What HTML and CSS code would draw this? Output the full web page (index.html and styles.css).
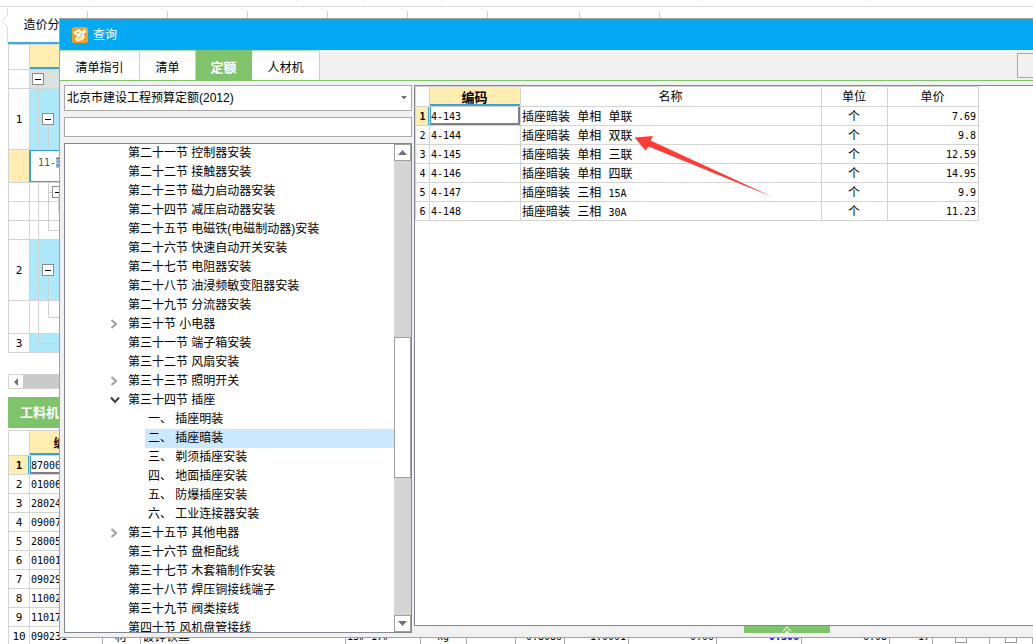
FILE: index.html
```html
<!DOCTYPE html>
<html lang="zh-CN">
<head>
<meta charset="utf-8">
<title>查询</title>
<link rel="stylesheet" href="styles.css">
</head>
<body>
<main class="app">
  <div class="toolbar"><i class="w206"></i><i class="w67"></i><i class="w78"></i><i class="w257"></i><i class="w171"></i><i></i></div>
  <nav class="pages">
    <svg class="pages-edge" width="8" height="36" viewBox="0 0 8 36"><path d="M7.500 1V8L2 14.500L7.500 20V36" fill="none" stroke="#dcdcdc"/></svg>
    <button class="page-tab">造价分析</button>
    <i></i><i></i><i></i><i></i><i></i><i class="broad"></i><i></i><i></i>
  </nav>

  <section class="outline">
    <div class="o-row o-head"><span class="o-num"></span><span class="o-cell"></span></div>
    <div class="o-row o-short o-total"><span class="o-num"></span><span class="o-cell"><button class="fold" aria-label="折叠"></button></span></div>
    <div class="o-row o-tall o-blue"><span class="o-num">1</span><span class="o-cell level-1"><button class="fold" aria-label="折叠"></button></span></div>
    <div class="o-row o-mid o-edit"><span class="o-num"></span><span class="o-cell">11-<mark>3</mark></span></div>
    <div class="o-row o-short"><span class="o-num"></span><span class="o-cell level-2"><button class="fold" aria-label="折叠"></button></span></div>
    <div class="o-row o-short"><span class="o-num"></span><span class="o-cell"></span></div>
    <div class="o-row o-short"><span class="o-num"></span><span class="o-cell"></span></div>
    <div class="o-row o-tall o-blue"><span class="o-num">2</span><span class="o-cell level-1"><button class="fold" aria-label="折叠"></button></span></div>
    <div class="o-row o-mid"><span class="o-num"></span><span class="o-cell"></span></div>
    <div class="o-row o-short o-blue"><span class="o-num">3</span><span class="o-cell"></span></div>
    <svg class="branches" width="32" height="310" viewBox="0 0 32 310"><path d="M8.500 40V105M8.500 138V298.500H26M8.500 74.500H12M18.500 81V105M18.500 138V185.500H32M18.500 147.500H22M28.500 154V166M8.500 225.500H12M18.500 232V272.500H32" fill="none" stroke="#d0d0d0"/></svg>
  </section>
  <div class="hscroll"><button aria-label="向左滚动"><svg width="6" height="8" viewBox="0 0 6 8"><path d="M5 0V8L1 4Z" fill="#6d7182"/></svg></button></div>

  <div class="section-bar"><button>工料机显示</button></div>
  <table class="materials">
    <colgroup><col class="w21"><col class="w73"><col class="w38"><col class="w205"><col class="w75"><col class="w46"><col class="w49"><col class="w49"><col class="w64"><col class="w88"><col class="w85"><col class="w88"><col class="w43"><col class="w57"><col></colgroup>
    <thead><tr><th></th><th class="current">编码</th><th colspan="13"></th></tr></thead>
    <tbody>
      <tr class="active"><th>1</th><td>870001</td><td colspan="13"></td></tr>
      <tr><th>2</th><td>010063</td><td colspan="13"></td></tr>
      <tr><th>3</th><td>280248</td><td colspan="13"></td></tr>
      <tr><th>4</th><td>090071</td><td colspan="13"></td></tr>
      <tr><th>5</th><td>280056</td><td colspan="13"></td></tr>
      <tr><th>6</th><td>010012</td><td colspan="13"></td></tr>
      <tr><th>7</th><td>090290</td><td colspan="13"></td></tr>
      <tr><th>8</th><td>110022</td><td colspan="13"></td></tr>
      <tr><th>9</th><td>110172</td><td colspan="13"></td></tr>
      <tr class="last"><th>10</th><td>090231</td><td class="mid cjk">材</td><td class="cjk">镀锌铁丝</td><td>13#~17#</td><td class="mid">kg</td><td></td><td class="end">0.8080</td><td class="end">1.0001</td><td class="end">0.00</td><td class="end changed">0.306</td><td class="end">6.08</td><td class="end">17</td><td class="mid"><input type="checkbox" aria-label="暂估"></td><td class="mid"><input type="checkbox" aria-label="锁定"></td></tr>
    </tbody>
  </table>
</main>

<section class="dialog" role="dialog" aria-labelledby="dialog-title">
  <header class="title">
    <svg width="16" height="16" viewBox="0 0 16 16"><rect width="16" height="16" rx="2" fill="#f7a01d"/><path d="M1.500 5L7 2L9.500 4.500L12.500 2L14.500 4L11.500 8L13 10L10.500 13L5 14.500L3 12L5.500 8.500L3 8Z" fill="#fff"/><path d="M4.500 6L7 5L5.500 7.500M6 12L10.500 6M8.500 11L10.500 9.500" fill="none" stroke="#f7a01d"/></svg>
    <h1 id="dialog-title">查询</h1>
  </header>
  <nav class="tabs">
    <button class="wide">清单指引</button><button>清单</button><button class="selected">定额</button><button class="third">人材机</button>
    <button class="action" aria-label="操作"></button>
  </nav>
  <div class="content">
    <aside class="side">
      <div class="combo">
        <select aria-label="定额库"><option>北京市建设工程预算定额(2012)</option></select>
        <svg width="6" height="4" viewBox="0 0 6 4"><path d="M0 0H6L3 3.500Z" fill="#6d7182"/></svg>
      </div>
      <input class="search" type="text" aria-label="搜索">
      <div class="tree-box">
        <ul class="tree">
          <li>第二十一节 控制器安装</li>
          <li>第二十二节 接触器安装</li>
          <li>第二十三节 磁力启动器安装</li>
          <li>第二十四节 减压启动器安装</li>
          <li>第二十五节 电磁铁(电磁制动器)安装</li>
          <li>第二十六节 快速自动开关安装</li>
          <li>第二十七节 电阻器安装</li>
          <li>第二十八节 油浸频敏变阻器安装</li>
          <li>第二十九节 分流器安装</li>
          <li class="closed"><svg width="8" height="10" viewBox="0 0 8 10"><path d="M1.500 1L6 5L1.500 9"/></svg>第三十节 小电器</li>
          <li>第三十一节 端子箱安装</li>
          <li>第三十二节 风扇安装</li>
          <li class="closed"><svg width="8" height="10" viewBox="0 0 8 10"><path d="M1.500 1L6 5L1.500 9"/></svg>第三十三节 照明开关</li>
          <li class="open"><svg width="10" height="8" viewBox="0 0 10 8"><path d="M1 1.500L5 6L9 1.500"/></svg>第三十四节 插座</li>
          <li class="child">一、 插座明装</li>
          <li class="child picked">二、 插座暗装</li>
          <li class="child">三、 剃须插座安装</li>
          <li class="child">四、 地面插座安装</li>
          <li class="child">五、 防爆插座安装</li>
          <li class="child">六、 工业连接器安装</li>
          <li class="closed"><svg width="8" height="10" viewBox="0 0 8 10"><path d="M1.500 1L6 5L1.500 9"/></svg>第三十五节 其他电器</li>
          <li>第三十六节 盘柜配线</li>
          <li>第三十七节 木套箱制作安装</li>
          <li>第三十八节 焊压铜接线端子</li>
          <li>第三十九节 阀类接线</li>
          <li>第四十节 风机盘管接线</li>
        </ul>
        <div class="vscroll">
          <button aria-label="向上滚动"><svg width="9" height="5" viewBox="0 0 9 5"><path d="M0 5H9L4.500 0Z" fill="#6d7182"/></svg></button>
          <span class="before"></span><span class="thumb"></span><span class="after"></span>
          <button aria-label="向下滚动"><svg width="9" height="5" viewBox="0 0 9 5"><path d="M0 0H9L4.500 5Z" fill="#6d7182"/></svg></button>
        </div>
      </div>
    </aside>
    <div class="results">
      <div class="results-box">
        <table class="quota">
          <colgroup><col class="w14"><col class="w91"><col class="w301"><col class="w66"><col class="w91"></colgroup>
          <thead><tr><th></th><th class="current">编码</th><th>名称</th><th>单位</th><th>单价</th></tr></thead>
          <tbody>
            <tr class="active"><th>1</th><td>4-143</td><td class="cjk">插座暗装 单相 单联</td><td class="mid cjk">个</td><td class="end">7.69</td></tr>
            <tr><th>2</th><td>4-144</td><td class="cjk">插座暗装 单相 双联</td><td class="mid cjk">个</td><td class="end">9.8</td></tr>
            <tr><th>3</th><td>4-145</td><td class="cjk">插座暗装 单相 三联</td><td class="mid cjk">个</td><td class="end">12.59</td></tr>
            <tr><th>4</th><td>4-146</td><td class="cjk">插座暗装 单相 四联</td><td class="mid cjk">个</td><td class="end">14.95</td></tr>
            <tr><th>5</th><td>4-147</td><td class="cjk">插座暗装 三相 <span class="code">15A</span></td><td class="mid cjk">个</td><td class="end">9.9</td></tr>
            <tr><th>6</th><td>4-148</td><td class="cjk">插座暗装 三相 <span class="code">30A</span></td><td class="mid cjk">个</td><td class="end">11.23</td></tr>
          </tbody>
        </table>
        <svg class="arrow" width="140" height="62" viewBox="0 0 140 62"><path d="M0.500 1.500L19 0L16.500 4.500L138.500 61L14.500 10.500L11.500 14.500Z" fill="#ff3b38"/></svg>
      </div>
      <button class="expand" aria-label="展开"><svg width="10" height="7" viewBox="0 0 10 7"><path d="M1 5.500L5 1L9 5.500" fill="none" stroke="#c9e8bd" stroke-width="1.500"/><path d="M3 7L5 4.500L7 7Z" fill="#fff"/></svg></button>
    </div>
  </div>
</section>
</body>
</html>
```
FILE: styles.css
```css
* { box-sizing: border-box; }
html, body { height: 100%; }
body {
  position: relative;
  margin: 0;
  overflow: hidden;
  background: #fff;
  color: #000;
  font: 12px/18px "Liberation Sans", "Noto Sans CJK SC", sans-serif;
}
button, input, select { font: inherit; color: inherit; margin: 0; padding: 0; border: 0; border-radius: 0; background: none; }
svg { display: block; flex: none; }

/* main window */
.app { display: flex; flex-direction: column; height: 100%; overflow: hidden; }
.toolbar { display: flex; flex: none; height: 7px; padding-left: 90px; border-bottom: 1px solid #dcdcdc; overflow: hidden; }
.toolbar i { flex: none; height: 1px; border-left: 1px solid #dcdcdc; }
.pages { display: flex; flex: none; height: 37px; overflow: hidden; }
.pages i { flex: none; width: 80px; height: 9px; margin-top: 4px; border-left: 1px solid #d0d0d0; }
.pages .broad { width: 92px; }
.page-tab { flex: none; width: 79px; border-bottom: 2px solid #38aee0; }

.outline { position: relative; flex: none; margin-left: 8px; border-left: 1px solid #d4d4d4; border-top: 1px solid #d4d4d4; }
.o-row { display: flex; border-bottom: 1px solid #d4d4d4; }
.o-num { display: flex; flex: none; align-items: center; justify-content: center; width: 21px; border-right: 1px solid #d4d4d4; font: 11px "DejaVu Sans Mono", monospace; }
.o-cell { display: flex; flex: none; align-items: center; width: 90px; padding-left: 2px; }
.o-short { height: 19px; }
.o-mid { height: 33px; }
.o-tall { height: 61px; }
.o-head { height: 25px; }
.o-head .o-cell { background: #ffedb1; border-bottom: 2px solid #38a3d1; }
.o-total .o-cell { background: #d9e2dd; }
.o-blue .o-cell { background: #ade8fb; }
.o-edit .o-num { width: 20px; background: #ffedb1; border-right: 0; }
.o-edit .o-cell { align-items: flex-start; padding: 6px 0 0 7px; border: 1px solid #38a3d1; border-left-width: 2px; font: 10px "DejaVu Sans Mono", monospace; color: #555; }
.o-edit mark { background: #9fc4f0; color: #555; }
.level-1 { padding-left: 12px; }
.level-2 { padding-left: 22px; }
.fold { position: relative; z-index: 1; display: flex; align-items: center; width: 12px; height: 12px; padding: 0 2px; background: #fff; border: 1px solid #8c8c8c; }
.fold::before { content: ""; width: 6px; height: 1px; background: #000; }
.branches { position: absolute; left: 21px; top: 0; }

.hscroll { display: flex; flex: none; height: 15px; margin: 21px 0 8px 8px; background: #cacaca; border: 1px solid #d4d4d4; }
.hscroll button { display: flex; align-items: center; justify-content: center; width: 14px; background: #fff; }
.section-bar { flex: none; margin-left: 8px; height: 31px; background: #7fc36a; }
.section-bar button { height: 31px; padding-left: 12px; color: #fff; font-size: 13px; font-weight: bold; }

table { border-collapse: collapse; table-layout: fixed; font: 10px/16px "DejaVu Sans Mono", "Noto Sans CJK SC", monospace; }
th, td { height: 19px; padding: 2px 2px 0 1px; border: 1px solid #d4d4d4; line-height: 16px; overflow: hidden; white-space: nowrap; }
td { text-align: left; }
tbody th { padding: 2px 0 0; font-weight: normal; text-align: center; }
thead th { padding-top: 4px; font: 12px/15px "Liberation Mono", "Noto Sans CJK SC", monospace; }
th.current { background: #ffedb1; box-shadow: inset 0 -2px #38a3d1; font-weight: bold; }
td.mid { text-align: center; }
td.end { text-align: right; }
td.cjk { padding-top: 4px; font: 12px/14px "Liberation Mono", "Noto Sans CJK SC", monospace; }
.code { font: 10px/10px "DejaVu Sans Mono", monospace; }
.active th { background: #ffedb1; box-shadow: inset -1px 0 #38a3d1; font-weight: bold; }
.active th + td { box-shadow: inset 1px 0 #38a3d1, inset -2px -2px #808080; }

.materials { flex: none; width: calc(100% - 8px); margin: 2px 0 0 8px; }
.materials thead th { height: 25px; }
.materials tbody th { font-size: 11px; }
.last td { border-color: #a8a8a8; }
.changed { color: #00f; font-weight: bold; }
.materials input { display: block; appearance: none; width: 12px; height: 12px; margin: 0 auto; border: 1px solid #999; }
.w14 { width: 14px; }
.w21 { width: 21px; }
.w38 { width: 38px; }
.w43 { width: 43px; }
.w46 { width: 46px; }
.w49 { width: 49px; }
.w57 { width: 57px; }
.w64 { width: 64px; }
.w66 { width: 66px; }
.w67 { width: 67px; }
.w73 { width: 73px; }
.w75 { width: 75px; }
.w78 { width: 78px; }
.w85 { width: 85px; }
.w88 { width: 88px; }
.w91 { width: 91px; }
.w171 { width: 171px; }
.w205 { width: 205px; }
.w206 { width: 206px; }
.w257 { width: 257px; }
.w301 { width: 301px; }

/* query window */
.dialog { position: absolute; z-index: 2; inset: 18px 0 6px 59px; display: flex; flex-direction: column; background: #f1f1f1; border: 1px solid #a3a3a3; border-right: 0; }
.title { display: flex; flex: none; align-items: center; gap: 5px; height: 31px; padding-left: 12px; background: #03a9f3; color: #fff; }
.title h1 { margin: 0; font-size: 12px; font-weight: normal; }
.tabs { display: flex; flex: none; height: 31px; border-bottom: 1px solid #7fc36a; }
.tabs button { width: 56px; padding-top: 4px; background: #fff; border-top: 1px solid #b7e3a8; border-right: 1px solid #b7e3a8; }
.tabs .wide { width: 80px; }
.tabs .third { width: 68px; }
.tabs .selected { background: #7fc36a; border-color: #7fc36a; color: #fff; font-size: 13px; font-weight: bold; }
.tabs .action { width: 16px; height: 25px; margin: 3px 0 0 auto; background: #f1f1f1; border: 1px solid #a8a8a8; border-right: 0; }
.content { display: flex; flex: 1; gap: 2px; min-height: 0; padding: 4px 0 4px 4px; }
.side { display: flex; flex: 0 0 348px; flex-direction: column; min-width: 0; }
.combo { display: flex; flex: none; align-items: center; height: 26px; padding-right: 4px; background: #fff; border: 1px solid #a8a8a8; }
.combo select { flex: 1; appearance: none; height: 24px; padding-left: 2px; }
.search { flex: none; width: 100%; height: 20px; margin: 6px 0; padding: 0 2px; background: #fff; border: 1px solid #a8a8a8; }
.tree-box { display: flex; flex: 1; min-height: 0; background: #fff; border: 1px solid #828790; }
.tree { flex: 1; margin: 0; padding: 0; list-style: none; overflow: hidden; }
.tree li { display: flex; align-items: center; height: 19px; padding: 0 0 2px 63px; white-space: pre; }
.tree li.closed, .tree li.open { padding-left: 45px; }
.tree svg { margin-right: 10px; fill: none; stroke: #a0a0a0; stroke-width: 2; }
.tree .open svg { margin-right: 8px; stroke: #404040; }
.tree li.child { margin-left: 80px; padding-left: 3px; }
.tree .picked { background: #cce8ff; }
.vscroll { display: flex; flex: 0 0 17px; flex-direction: column; background: #d4d4d4; }
.vscroll button { display: flex; flex: none; align-items: center; justify-content: center; height: 17px; background: #fff; border: 1px solid #a0a0a0; }
.vscroll .before { flex: 177; }
.vscroll .thumb { flex: 139; background: #fff; border: 1px solid #a0a0a0; }
.vscroll .after { flex: 138; }

.results { display: flex; flex: 1; flex-direction: column; min-width: 0; }
.results-box { position: relative; flex: 1; background: #fff; border: 1px solid #828790; border-right: 0; }
.quota thead th { height: 20px; font-weight: normal; }
.quota thead th.current { font-weight: bold; font-size: 13px; }
.arrow { position: absolute; left: 219px; top: 50px; }
.expand { display: flex; flex: none; align-items: center; justify-content: center; align-self: flex-end; width: 86px; height: 7px; margin-right: 203px; background: #7fc36a; }
```
